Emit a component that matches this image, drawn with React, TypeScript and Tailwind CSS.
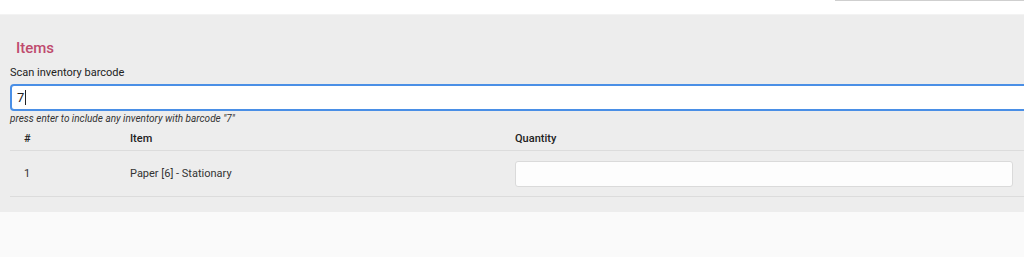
import React from "react";

export default function App() {
  return (
    <div
      className="w-[1024px] h-[257px] overflow-hidden bg-[#fafafa]"
      style={{ fontFamily: "Roboto, 'Liberation Sans', sans-serif" }}
    >
      <div className="h-[15px] bg-white flex justify-end border-b border-[#f3f3f3]">
        <div className="w-[189px] h-px bg-[#cfcfcf]" />
      </div>
      <div className="h-[197px] bg-[#ededed] pl-[10px] pt-[23px] w-[1060px]">
        <h2 className="pl-[6px] text-[15px] leading-[20px] font-medium text-[#bf4a6d]">
          Items
        </h2>
        <label className="block mt-[8px] text-[11px] leading-[14px] text-[#222]">
          Scan inventory barcode
        </label>
        <div className="mt-[4px] h-[27px] w-[1040px] rounded-[4px] border-2 border-[#4a8fe6] bg-white flex items-center pl-[5px] text-[13px] text-[#222]">
          <span>7</span>
          <span className="ml-px w-px h-[15px] bg-[#222]" />
        </div>
        <p className="pt-px text-[10px] leading-[14px] italic text-[#333]">
          press enter to include any inventory with barcode "7"
        </p>
        <div className="w-[1040px]">
          <div className="grid grid-cols-[106px_385px_1fr] h-[25px] items-center border-b border-[#dcdcdc] text-[11px] font-medium text-[#222]">
            <div className="pl-[14px] pt-[2px]">#</div>
            <div className="pl-[14px] pt-[2px]">Item</div>
            <div className="pl-[14px] pt-[2px]">Quantity</div>
          </div>
          <div className="grid grid-cols-[106px_385px_1fr] h-[46px] items-center border-b border-[#dcdcdc] text-[11px] text-[#333]">
            <div className="pl-[14px] pt-[2px]">1</div>
            <div className="pl-[14px] pt-[2px]">Paper [6] - Stationary</div>
            <div className="pl-[14px]">
              <div className="w-[498px] h-[26px] rounded-[3px] border border-[#dadada] bg-[#fdfdfd]" />
            </div>
          </div>
        </div>
      </div>
    </div>
  );
}
